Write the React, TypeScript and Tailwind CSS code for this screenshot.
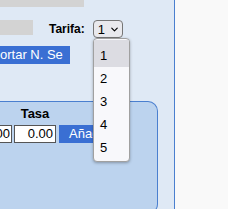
import { ChevronDown } from "lucide-react";

const OPTIONS = ["1", "2", "3", "4", "5"];

export default function App() {
    return (
        <div className="w-[228px] h-[209px] overflow-hidden flex bg-[#f9f9f9] text-[13px] text-black" style={{ fontFamily: '"Liberation Sans", Arial, sans-serif' }}>
            <div className="relative w-[175px] h-full shrink-0 bg-[#dfe9f5] border-r border-[#4a7fcf]">
                <div className="h-[7px] w-[84px] bg-[#d3d3d3]" />

                {/* Tarifa row */}
                <div className="flex items-start mt-[13px] h-[18px]">
                    <div className="h-[15px] w-[33px] bg-[#d3d3d3]" />
                    <span className="ml-[16px] font-bold text-[12px] leading-[18px]">Tarifa:</span>
                    <div className="ml-[8px] h-[18px] w-[30px] flex items-center gap-[4px] pl-[4px] rounded-[4px] border border-[#767676] bg-[#e9e9ed] leading-none">
                        <span>1</span>
                        <ChevronDown className="w-[11px] h-[11px]" strokeWidth={2.5} />
                    </div>
                </div>

                <div className="mt-[8px] h-[18px] w-[70px] bg-[#3a6fd3] text-white leading-[18px] whitespace-nowrap overflow-hidden">
                    ortar N. Se
                </div>

                {/* Tasa panel */}
                <div className="mt-[37px] h-[113px] w-[158px] bg-[#bcd3ee] border-y border-r border-[#4a7fcf] rounded-r-[10px]">
                    <div className="w-[70px] text-center font-bold mt-[4px] leading-[16px]">Tasa</div>
                    <div className="flex items-center mt-[3px]">
                        <div className="-ml-[20px] h-[18px] w-[32px] bg-white border border-[#555] text-right pr-[1px] leading-[16px]">0.00</div>
                        <div className="ml-[2px] h-[18px] w-[42px] bg-white border border-[#555] text-right pr-[2px] leading-[16px]">0.00</div>
                        <div className="ml-[3px] h-[18px] w-[60px] bg-[#3a6fd3] text-white pl-[10px] leading-[18px] whitespace-nowrap">Añadir</div>
                    </div>
                </div>

                {/* open dropdown */}
                <div className="absolute left-[93px] top-[38px] w-[37px] h-[124px] bg-[#f8f8fb] border border-[#a0a0a0] rounded-[4px] shadow-[0_1px_3px_rgba(0,0,0,0.3)] py-[1px] overflow-hidden">
                    {OPTIONS.map((o, i) => (
                        <div key={o} className={`h-[23px] pl-[6px] leading-[23px] ${i === 0 ? "bg-[#dcdce2] h-[27px] leading-[31px]" : ""}`}>
                            {o}
                        </div>
                    ))}
                </div>
            </div>
        </div>
    );
}
